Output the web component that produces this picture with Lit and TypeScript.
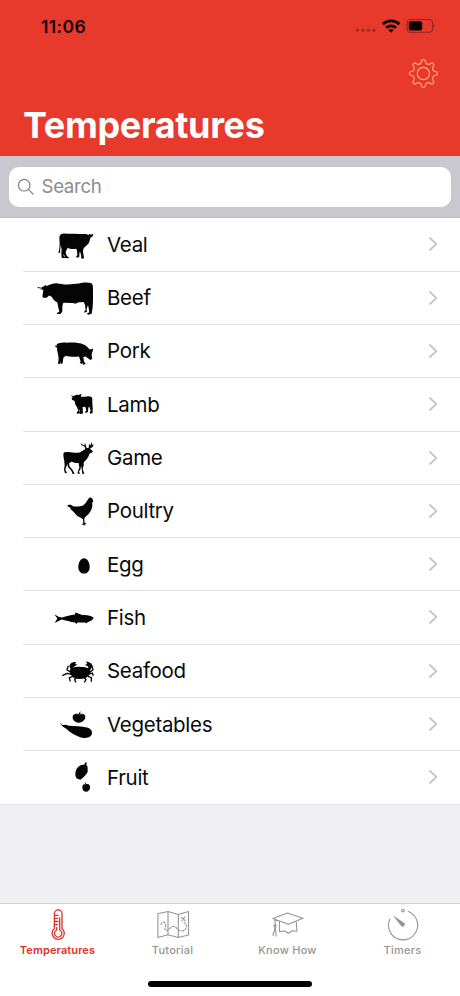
import { LitElement, html, svg, css } from "lit";
import { customElement, property } from "lit/decorators.js";

const veal = svg`<path d="M61 39C68 34 80 37 92 37C108 36 122 38 136 38L146 41L147 37L153 40L159 37L158 42C156 47 152 46 150 50C148 58 147 66 141 70C135 75 131 78 129 83L128 92L131 108L130 112L122 111L123 104L119 90L117 96L117 106L112 109L107 107L111 101L110 86L107 82C100 84 94 82 86 81L82 79C80 85 76 88 76 94L80 105L86 108L84 111L75 110L70 97L70 105L75 108L72 111L64 109L63 94L64 84L61 70L60 84L59 94L54 95L57 82L58 66C57 52 56 43 61 39Z"/>`;
const beef = svg`<path d="M-8 195L2 197L12 192L15 189L19 192L28 188C34 186 42 183 52 184C62 184 70 188 82 187L116 184C132 180 144 181 152 183C158 186 158 194 158 204L158 238L157 256L154 275L145 278L139 275L147 271L145 258L143 249L139 262L140 269L132 272L132 268L136 264L134 248L130 240C120 241 112 240 106 245L98 243L69 242L66 252L66 268L61 276L50 276L50 273L57 269L54 256L51 241C42 236 38 232 34 224L26 220L19 227L9 227L6 223L8 211L9 203L0 202L6 200L-8 198Z"/>`;
const pork = svg`<path d="M49 50C55 45 68 43 80 45C98 44 118 45 130 50C138 54 144 60 148 65L158 63L157 71C153 76 154 86 156 93L150 97L142 91L136 86L129 88L131 101L136 109L129 111L126 106L124 109L118 105L121 101L116 86C104 88 88 88 76 84L69 90L67 106L62 110L60 104L58 110L53 108L55 92C54 80 50 72 50 60L45 57L46 52L50 55Z"/>`;
const lamb = svg`<path d="M90 204L100 206L108 202L114 203L124 199L121 207C126 209 132 208 140 207C149 206 155 208 156 214L156 226L157 240L157 257L150 259L148 255L151 250L147 237L144 241L143 254L136 257L134 253L138 250L135 238L127 239L128 258L119 260L117 256L119 248L117 246L117 258L109 259L110 254L114 250L110 239C105 234 104 228 103 221L95 217L94 212L98 209Z"/>`;
const game = svg`<path d="M70 56C74 52 80 54 86 54C98 57 108 57 118 55L127 50L135 45L133 38L123 33L121 26L126 31L132 34L134 26L136 33L139 42L145 42L146 30L151 34L153 24L156 33L160 30L157 39L149 43L153 48L158 51L155 55L148 58L144 68C140 76 134 80 130 85L130 94L127 104L130 114L132 120L126 119L124 104L122 94L121 104L116 113L119 119L112 119L112 114L117 101L115 87L106 87L93 83L86 88L88 97L97 108L103 119L97 120L93 110L83 99L81 90L78 98L75 107L80 117L74 118L71 107L73 94L72 82L70 72L69 62Z"/>`;
const poultry = svg`<path d="M82 214C89 211 94 213 98 217C107 219 120 218 128 215C136 210 140 201 145 194L149 190L156 194L159 202L156 206L156 216C154 230 148 238 140 245L133 251L132 257L133 267L139 270L133 273L131 277L129 272L122 271L129 268L128 256L120 251C110 248 106 241 101 235L91 226L89 221L82 218Z"/>`;
const egg = svg`<path d="M131 56C141 56 148 69 148 82C148 94 141 102 131 102S114 94 114 82C114 69 121 56 131 56Z"/>`;
const fish = svg`<path d="M42 225L56 233L66 235C78 231 90 227 104 226L105 220L126 227C142 226 152 229 160 235C159 242 151 246 143 248L138 252L134 250L112 250L108 254L104 250C90 248 76 244 64 241L43 251L51 238Z"/>`;
const seafood = svg`<path d="M88 75C94 66 110 64 121 66C134 64 146 68 150 76C150 88 144 96 132 100C124 102 112 102 104 100C94 96 88 86 88 75Z"/><path d="M93 76L88 66C86 57 94 50 108 51L104 57L111 58L98 67L101 75ZM140 74L145 66L134 59L141 57L137 50C150 50 158 57 155 66L149 76Z"/><path class="legs" d="M94 84L80 74L84 62M146 84L158 74L155 62M94 88L80 85L66 92M146 87L156 84L159 92M99 94L87 98L90 109M143 94L153 98L153 110M108 98L103 104L107 112M132 98L137 104L132 112"/>`;
const vegetables = svg`<path d="M97 216C98 208 107 206 114 208L121 199L119 207L126 207C134 208 137 214 134 222C130 230 122 234 115 234C104 233 96 226 97 216Z"/><path d="M60 234L66 241L76 240L86 243C102 245 124 244 140 248C152 251 158 260 154 270C149 278 138 281 126 279C108 275 90 264 78 252L68 246L62 239Z"/><path class="cut" d="M106 207L118 210L128 208"/>`;
const fruit = svg`<path d="M134 69L140 69L138 75L142 83L142 98C136 108 128 117 120 121L109 117L105 108C105 96 107 88 114 82C120 77 127 75 133 75Z"/><path d="M134 127L138 134C146 132 151 139 149 147C147 154 143 157 138 157C131 157 126 152 126 144C126 137 130 133 135 135Z"/>`;

const foods = [
  { name: "Veal", art: veal, top: -10.2 },
  { name: "Beef", art: beef, top: 149.8 },
  { name: "Pork", art: pork, top: -8.2 },
  { name: "Lamb", art: lamb, top: 151.8 },
  { name: "Game", art: game, top: -6.2 },
  { name: "Poultry", art: poultry, top: 153.3 },
  { name: "Egg", art: egg, top: -4.8 },
  { name: "Fish", art: fish, top: 155.1 },
  { name: "Seafood", art: seafood, top: -0.2 },
  { name: "Vegetables", art: vegetables, top: 159.8 },
  { name: "Fruit", art: fruit, top: 34.8 },
];

const gearPath = (() => {
  const pts: string[] = [];
  const p = (r: number, deg: number) => {
    const a = (deg * Math.PI) / 180;
    return `${(15 + r * Math.cos(a)).toFixed(2)} ${(15 + r * Math.sin(a)).toFixed(2)}`;
  };
  for (let i = 0; i < 8; i++) {
    const c = i * 45 - 90;
    pts.push(`${i ? "L" : "M"}${p(11, c - 12)}L${p(12.9, c - 8)}Q${p(13.8, c - 7)} ${p(13.8, c - 3)}L${p(13.8, c + 3)}Q${p(13.8, c + 7)} ${p(12.9, c + 8)}L${p(11, c + 12)}Q${p(9.4, c + 22.5)} ${p(11, c + 33)}`);
  }
  return pts.join("") + "Z";
})();

@customElement("food-row")
export class FoodRow extends LitElement {
  @property({ attribute: false }) food = foods[0];

  static styles = css`
    :host { display: flex; align-items: center; height: 53.3px; padding-left: 30px; box-sizing: border-box;
      background: linear-gradient(#e2e2e4, #e2e2e4) 23px 100% / 100% 1px no-repeat #fff; }
    :host(:last-child) { background-position: 0 100%; }
    .art { width: 70px; height: 53.3px; flex: none; overflow: visible; fill: #050505; }
    .legs { fill: none; stroke: #050505; stroke-width: 4; stroke-linejoin: round; }
    .cut { fill: none; stroke: #777; stroke-width: 1.5; }
    .name { flex: 1; margin: 0 0 1.4px 7px; font-size: 20.5px; letter-spacing: -0.3px; color: #0a0a0a; }
    .chevron { width: 10px; height: 16px; margin: 0 22px 1.4px 0; fill: none; stroke: #c7c7ca; stroke-width: 1.9; }
  `;

  render() {
    return html`
      <svg class="art" viewBox="-31 ${this.food.top} 210 160">${this.food.art}</svg>
      <span class="name">${this.food.name}</span>
      <svg class="chevron" viewBox="0 0 10 16"><path d="M1.5 1.5L8.3 8L1.5 14.5" /></svg>
    `;
  }
}

@customElement("app-root")
export class AppRoot extends LitElement {
  static styles = css`
    :host { display: flex; flex-direction: column; width: 460px; height: 996px; overflow: hidden;
      background: #efeff4; font-family: Inter, "Liberation Sans", sans-serif; }
    svg { display: block; flex: none; }
    .header { height: 156px; flex: none; background: #e73a2d; display: flex; flex-direction: column; }
    .status { display: flex; align-items: center; height: 52px; padding: 0 24px 0 41px; }
    .time { flex: 1; font-size: 17.5px; font-weight: 600; letter-spacing: 0.4px; color: #160403; }
    .actions { display: flex; justify-content: flex-end; padding: 6px 21px 0 0; }
    .gear { fill: none; stroke: #ffb48c; stroke-width: 1.1; stroke-linejoin: round; }
    .title { margin: 13px 0 0 23px; font-size: 36px; line-height: 46px; font-weight: 700; letter-spacing: -0.35px; color: #fff; }
    .searchbar { height: 62.4px; flex: none; box-sizing: border-box; padding: 11px 9px; background: #c8c8ce; border-bottom: 1px solid #bcbcc1; }
    .field { height: 40px; border-radius: 10px; background: #fff; display: flex; align-items: center; padding-left: 8px; gap: 6.5px;
      font-size: 18.7px; letter-spacing: -0.35px; color: #8b8b8f; }
    .field span { margin-bottom: 1px; }
    .lens { fill: none; stroke: #828286; stroke-width: 1.2; stroke-linecap: round; }
    .list { flex: 1; }
    .tabs { height: 93px; flex: none; box-sizing: border-box; border-top: 1px solid #d2d2d6; background: #fff;
      display: grid; grid-template-columns: repeat(4, 115px); grid-template-rows: 60px 1fr; }
    .tab { display: flex; flex-direction: column; align-items: center; padding-top: 3px; gap: 2px; font-size: 11px; font-weight: 500;
      line-height: 14px; letter-spacing: 0.25px; color: #959595; }
    .tab.active { color: #dc3226; font-weight: 600; letter-spacing: 0.1px; }
    .tab svg { fill: none; stroke: currentColor; stroke-width: 1.1; stroke-linejoin: round; stroke-linecap: round; }
    .tab.active svg { stroke-width: 1.3; }
    .tab .solid { fill: currentColor; stroke: none; }
    .tab .dash { stroke-dasharray: 2 1.6; }
    .home { grid-column: 1 / -1; justify-self: center; width: 164px; height: 5.5px; margin-top: 17px; border-radius: 3px; background: #000; }
  `;

  render() {
    return html`
      <div class="header">
        <div class="status">
          <span class="time">11:06</span>
          <svg width="84" height="20" viewBox="352 15.5 84 20">
            <g fill="#a92a21">
              <circle cx="357.3" cy="29.8" r="1.8" /><circle cx="362.9" cy="29.8" r="1.8" />
              <circle cx="368.4" cy="29.8" r="1.8" /><circle cx="374" cy="29.8" r="1.8" />
            </g>
            <g fill="none" stroke="#140302" stroke-width="2.8">
              <path d="M382.8 23.6A12.2 12.2 0 0 1 399.4 23.6" />
              <path d="M386.2 27.2A7.2 7.2 0 0 1 396 27.2" />
            </g>
            <path fill="#140302" d="M388.3 29.6Q391.1 27.5 393.9 29.6L391.1 32.2Z" />
            <rect x="407" y="19" width="25.6" height="12.8" rx="3.6" fill="none" stroke="#8f251c" stroke-width="1.1" />
            <rect x="408.8" y="20.8" width="13.4" height="9.2" rx="2" fill="#080101" />
            <path fill="#8f251c" d="M433.8 23.3Q435.8 25.4 433.8 27.5Z" />
          </svg>
        </div>
        <div class="actions">
          <svg class="gear" width="31" height="31" viewBox="-.4 -.5 31 31"><path d=${gearPath} /><circle cx="15" cy="15" r="6.1" /></svg>
        </div>
        <div class="title">Temperatures</div>
      </div>
      <div class="searchbar">
        <div class="field">
          <svg class="lens" width="18" height="18" viewBox="0 0 18 18"><circle cx="7.2" cy="7.2" r="5.8" /><path d="M11.4 11.4L16 16" /></svg>
          <span>Search</span>
        </div>
      </div>
      <div class="list">${foods.map((food) => html`<food-row .food=${food}></food-row>`)}</div>
      <div class="tabs">
        <div class="tab active">
          <svg width="34" height="34" viewBox="40.5 907 34 34">
            <path d="M53.9 928.6V913.6A3.8 3.8 0 0 1 61.5 913.6V928.6A6.1 6.1 0 1 1 53.9 928.6Z" />
            <path d="M59.2 918V930A3.7 3.7 0 1 1 56.2 930V927.5M54 915.3H57.6M54 918.4H57M54 921.5H57.6M54 924.6H57" />
          </svg>
          <span>Temperatures</span>
        </div>
        <div class="tab">
          <svg width="34" height="34" viewBox="155.5 907 34 34">
            <path d="M157.4 913.7L167.5 911.5L177.8 914.5L188 911.5V935L177.8 937.5L167.5 934.8L157.4 937.5ZM167.5 911.5V934.8M177.8 914.5V937.5" />
            <path class="dash" d="M160.5 924.5C161.5 921 165 921.5 165.3 925C165.5 928 162.5 929.5 166 930.8C169 929.5 170 926.5 173 926.3C176 926.3 177 931 181 931C187 930.5 187 924 183.5 922.3" />
            <path d="M181 917.5L184.5 920.5M184.3 917L181.3 921" />
          </svg>
          <span>Tutorial</span>
        </div>
        <div class="tab">
          <svg width="34" height="34" viewBox="270.5 907 34 34">
            <path d="M272.3 918.6L287 913L302.5 918.3L287.8 924.3ZM279 922V931.6L284 931L287.8 933.2L291.7 930.7L296.4 931.3L295.8 922M274.4 919.5L274.8 926.8L272.5 935.5M274.8 926.8L275.7 936" />
            <circle cx="274.5" cy="926" r="1.1" />
          </svg>
          <span>Know How</span>
        </div>
        <div class="tab">
          <svg width="34" height="34" viewBox="385.5 907 34 34">
            <path d="M389.2 919.4A14.6 14.6 0 1 0 407.8 911.6" /><circle cx="402.4" cy="910.6" r="1.3" />
            <path class="solid" d="M392.2 915.2L403.6 922.7A2 2 0 1 1 400.7 926Z" />
          </svg>
          <span>Timers</span>
        </div>
        <div class="home"></div>
      </div>
    `;
  }
}
